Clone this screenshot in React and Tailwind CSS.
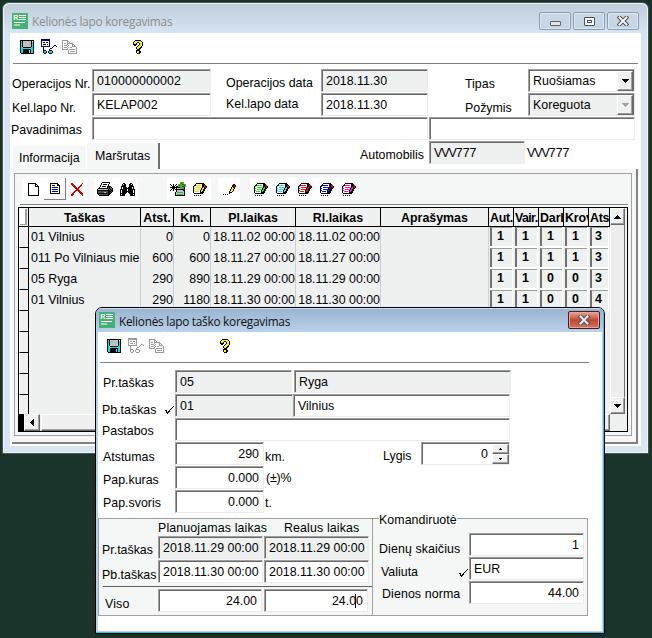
import React from "react";

const PALETTE = {
  K: "#000000", C: "#00e5ee", G: "#c0c0c0", g: "#9a9a9a", W: "#ffffff", Y: "#fff200",
  N: "#000080", R: "#d00000", E: "#20c030", D: "#505050", y: "#808000",
};

function Pixels({ rows, ink, className = "" }) {
  const w = Math.max(...rows.map((r) => r.length));
  const colors = { ...PALETTE, X: ink };
  return (
    <svg width={w} height={rows.length} viewBox={`0 0 ${w} ${rows.length}`} shapeRendering="crispEdges" className={"block shrink-0 " + className}>
      {rows.flatMap((r, y) =>
        [...r].map((c, x) => (c === "." ? null : <rect key={x + "-" + y} x={x} y={y} width="1" height="1" fill={colors[c]} />))
      )}
    </svg>
  );
}

const SAVE = [
  "KKKKKKKKKKKKKK",
  "KCKGGGGGGGGKWK",
  "KCKGGGGGGGGKCK",
  "KCKGGGGGGGGKCK",
  "KCKGGGGGGGGKCK",
  "KCKGGGGGGGGKCK",
  "KCKGGGGGGGGKCK",
  "KCCKKKKKKKKCCK",
  "KCCCCCCCCCCCCK",
  "KCCKKKKKKKKCCK",
  "KCCKKKKKKGKCCK",
  "KCCKKKKKKGKCCK",
  "KCCKKKKKKGKCCK",
  ".KKKKKKKKKKKKK",
];
const VIEW = [
  "NNNNNNNNN.......",
  "NNNNNNNNN.......",
  "NWWWWWWWN.......",
  "NWKKWKKWN.......",
  "NWWWWWWWN.......",
  "NWKKKWKWN.......",
  "NWWWWWWWN....KK.",
  "NNNNNNNNN...K..K",
  "..K........K....",
  "..K......KK.....",
  "..K.....K.......",
  "..KKK...KKK.....",
  "..KCCK.KCCCK....",
  "..KCCK.KCCCK....",
  "...KK...KKK.....",
];
const VIEW_OFF = VIEW.map((r) => r.replace(/[NK]/g, "g").replace(/C/g, "W"));
const COPY = [
  "gggggg.........",
  "gWWWWgg........",
  "gWWWWgWg.......",
  "gWggWgggggg....",
  "gWWWWgWWWWgg...",
  "gWgggWgWWWgWg..",
  "gWWWWgWWWWgggg.",
  "gWgggWgWggWWWWg",
  "gWWWWgWWWWWWWWg",
  "ggggggWggggggWg",
  "......gWWWWWWWg",
  "......gWgggggWg",
  "......gWWWWWWWg",
  "......ggggggggg",
];
const HELP = [
  "..KKKKKK..",
  ".KYYYYYYK.",
  "KYYYKKYYYK",
  "KYYK..KYYK",
  "KKKK..KYYK",
  ".KK..KYYYK",
  "....KYYYK.",
  "...KYYYKK.",
  "...KYYKK..",
  "....KKK...",
  "...KKKK...",
  "...KYYKK..",
  "...KYYKK..",
  "....KKK...",
];
const NEW_PAGE = [
  "KKKKKKKK...",
  "KWWWWWWKK..",
  "KWWWWWWKWK.",
  "KWWWWWWKKKK",
  "KWWWWWWWWWK",
  "KWWWWWWWWWK",
  "KWWWWWWWWWK",
  "KWWWWWWWWWK",
  "KWWWWWWWWWK",
  "KWWWWWWWWWK",
  "KWWWWWWWWWK",
  "KWWWWWWWWWK",
  "KKKKKKKKKKK",
];
const EDIT_PAGE = [
  "KKKKKKKK..",
  "KWWWWWWKK.",
  "KWNNNWWKKK",
  "KWWWWWWWWK",
  "KWNNNNNNWK",
  "KWWWWWWWWK",
  "KWNNNNNNWK",
  "KWWWWWWWWK",
  "KWNNNNNNWK",
  "KWWWWWWWWK",
  "KKKKKKKKKK",
];
const DELETE = [
  "RR.........R.",
  "RRR.......R..",
  ".RRR.....RR..",
  "..RRR...RR...",
  "...RRR.RR....",
  "....RRRR.....",
  ".....RRR.....",
  "....RRRRR....",
  "...RR..RRR...",
  "..RR....RRR..",
  ".RR......RRR.",
  "RRR.......RR.",
  "RR.........R.",
];
const PRINT = [
  ".....KKKKKKKK...",
  "....KWWWWWWWK...",
  "....KWKKKKWK....",
  "...KWWWWWWWK....",
  "...KWKKKKWKKKK..",
  "..KWWWWWWWKDKDK.",
  ".KKKKKKKKKKDKDDK",
  "KGGGGGGGGGGKDKDK",
  "KKKKKKKKKKKKKDKK",
  "KDDDDDDDDDDKKKDK",
  "KDDDDDDGGDDKKDK.",
  "KKKKKKKKKKKKKK..",
  ".KDDDDDDDDDKK...",
  "..KKKKKKKKKK....",
];
const FIND = [
  "...KK.....KK...",
  "..KWKK...KKWK..",
  "..KKKK...KKKK..",
  ".KKKKK...KKKKK.",
  ".KWKKKK.KKKKWK.",
  ".KWKKKKKKKKKWK.",
  "KKKKKKKWKKKKKKK",
  "KWKKKKKWKKKKKWK",
  "KWKKKKKKKKKKKWK",
  "KWKKKKK.KKKKKWK",
  "KKKKKK...KKKKKK",
  "KWKKK.....KKKWK",
  "KKKKK.....KKKKK",
];
const ADD = [
  "..........EEEE..",
  "..........EREE..",
  "K..K..K.EEEERREE",
  ".K.K.K..EREEEERE",
  "..KKK.KKEEEERREE",
  "KKKKKKKKKKEEEEK.",
  "..KKK.KGGGEEEEK.",
  ".K.K.KKKKKKKKKK.",
  "K..K..KGGGGGGKK.",
  "......KGGGGGGGK.",
  ".....KGEEEEEEGK.",
  ".....KGGGGGGGGK.",
  ".....KGEEEEEEGK.",
  ".....KKKKKKKKKK.",
];
const PEN_PAGE = [
  "...KKKKKKKK...",
  "..KWWWWWWKKK..",
  ".KKXXXXXWKKRR.",
  "KXWWWWWWWKKRRK",
  "KWWXXXXXXKXKRK",
  "KXWWWWWWKXXKK.",
  "KWWXXXXXKXKK..",
  "KXWWWWWKXXKK..",
  "KWXXXXWKXKK...",
  "KWWWWWWKKKK...",
  ".KKKKKKKKK....",
  "..............",
  ".K.K.K.K......",
];
const PEN = [
  "..........KK.",
  ".........KRRK",
  ".........KRRK",
  "........KYKK.",
  "........KYYK.",
  ".......KYYK..",
  ".......KYYK..",
  "......KYYK...",
  "......KKK....",
  "......K......",
  "K.K.K........",
];
const CHECK = [
  "........K",
  ".......K.",
  "......K..",
  ".....K...",
  "KK..K....",
  ".K.KK....",
  ".KKK.....",
  "..K......",
];

const Text = ({ className = "", children }) => (
  <div className={"shrink-0 whitespace-pre leading-4 " + className}>{children}</div>
);

/* Sunken text box; height and width come from the caller. */
const Field = ({ className = "", children }) => (
  <div className={"h-[23px] shrink-0 border-t border-l border-r border-b border-t-[#a0a0a0] border-l-[#a0a0a0] border-r-[#ececec] border-b-[#ececec] " + className}>
    <div className="h-full whitespace-pre border-t border-l border-[#696969] pl-[3px] pr-1 pt-[2px] leading-4">{children}</div>
  </div>
);

const Arrow = ({ points, fill = "#000", w = 7, h = 4 }) => (
  <svg width={w} height={h} viewBox={`0 0 ${w} ${h}`} shapeRendering="crispEdges" className="block"><polygon points={points} fill={fill} /></svg>
);

const Raised = ({ className = "", children }) => (
  <div className={"flex shrink-0 items-center justify-center border border-t-white border-l-white border-r-[#696969] border-b-[#696969] bg-[#f0f0f0] shadow-[inset_-1px_-1px_0_#a0a0a0] " + className}>{children}</div>
);

const Combo = ({ text, disabled }) => (
  <div className={"flex h-[23px] w-[107px] border border-t-[#a0a0a0] border-l-[#a0a0a0] border-r-[#ececec] border-b-[#ececec] " + (disabled ? "bg-[#eff0f0]" : "bg-white")}>
    <div className="flex flex-1 border-t border-l border-r border-[#696969]">
      <div className="flex-1 pl-[3px] pt-[2px] leading-4 tracking-[0.05px]">{text}</div>
      <Raised className="h-5 w-4"><Arrow points="0,0 7,0 3.5,4" fill={disabled ? "#a0a0a0" : "#000"} /></Raised>
    </div>
  </div>
);

const Logo = () => (
  <svg width="16" height="16" viewBox="0 0 16 16" className="block shrink-0">
    <rect width="16" height="16" fill="#45b174" />
    <text x="1.3" y="7.4" fontSize="7" fontWeight="bold" fontFamily="Liberation Sans" fill="#fff">R</text>
    <path d="M7 2.5h7M7 4.5h7M7 6.5h7M2 9.5h11M2 12h6" stroke="#fff" strokeWidth="1" />
  </svg>
);

const Cross = () => (
  <svg width="12" height="10" viewBox="0 0 12 10" className="block">
    <path d="M2.5 1.5 L9.5 8.5 M9.5 1.5 L2.5 8.5" stroke="#4a4f5c" strokeWidth="4" strokeLinecap="square" />
    <path d="M2.5 1.5 L9.5 8.5 M9.5 1.5 L2.5 8.5" stroke="#f4f4f4" strokeWidth="2" strokeLinecap="square" />
  </svg>
);

const Caption = ({ children }) => (
  <div className="flex h-[18px] w-8 items-center justify-center rounded-[2px] border border-[#8b9bb0] bg-linear-to-b from-[#cbd8e5] to-[#c5d4e4] shadow-[inset_0_0_0_1px_#dde7f1]">{children}</div>
);

const COLS = [
  { t: "Taškas", w: "w-[112px]", a: "pl-[2px]", rows: ["01 Vilnius", "011 Po Vilniaus mie", "05 Ryga", "01 Vilnius"] },
  { t: "Atst.", w: "w-[33px]", a: "text-right", rows: ["0", "600", "290", "290"] },
  { t: "Km.", w: "w-[37px]", a: "text-right", rows: ["0", "600", "890", "1180"] },
  { t: "Pl.laikas", w: "w-[85px]", a: "text-right", rows: ["18.11.02 00:00", "18.11.27 00:00", "18.11.29 00:00", "18.11.30 00:00"] },
  { t: "Rl.laikas", w: "w-[85px]", a: "text-right", rows: ["18.11.02 00:00", "18.11.27 00:00", "18.11.29 00:00", "18.11.30 00:00"] },
  { t: "Aprašymas", w: "w-[108px]", a: "", rows: [] },
];
const BOX_COLS = [
  { t: "Aut.", w: "w-[25px]", k: "tracking-[-0.3px]", rows: [1, 1, 1, 1] },
  { t: "Vair.", w: "w-[25px]", k: "tracking-[-0.6px]", rows: [1, 1, 1, 1] },
  { t: "Darb", w: "w-[25px]", k: "tracking-[-0.1px]", rows: [1, 1, 0, 0] },
  { t: "Krov", w: "w-[25px]", k: "tracking-[-0.1px]", rows: [1, 1, 0, 0] },
  { t: "Ats", w: "w-[21px]", k: "tracking-[-0.3px]", rows: [3, 3, 3, 4] },
];

function RouteGrid() {
  return (
    <div className="ml-[3px] flex h-[225px] w-[610px] border border-black bg-[#eff0f0]">
      <div className="flex w-[591px] shrink-0 flex-col">
        <div className="flex h-[19px] border-b border-black text-[12.4px] font-bold leading-4">
          <div className="w-[10px] border-r border-black bg-[#f0f0f0] p-px"><div className="h-full border-r-2 border-b border-[#a0a0a0] bg-white" /></div>
          {COLS.map((c) => (
            <div key={c.t} className={"overflow-hidden whitespace-nowrap border-r border-black pt-[2px] text-center " + c.w}>{c.t}</div>
          ))}
          {BOX_COLS.map((c) => (
            <div key={c.t} className={"overflow-hidden whitespace-nowrap border-r border-black pt-[2px] pl-px " + c.w + " " + c.k}>{c.t}</div>
          ))}
        </div>
        <div className="flex h-[187px] overflow-hidden">
          <div className="w-[10px] shrink-0 border-r border-black">
            {Array.from({ length: 9 }, (_, i) => (
              <div key={i} className="h-[21px] border-b border-l border-l-white border-b-black bg-[#f0f0f0] last:border-b-0" />
            ))}
          </div>
          {COLS.map((c) => (
            <div key={c.t} className={"shrink-0 border-r border-[#cfcfcf] " + c.w}>
              {c.rows.map((r, i) => (
                <div key={i} className={"h-[21px] whitespace-nowrap pt-[2px] leading-4 " + c.a}>{r}</div>
              ))}
            </div>
          ))}
          {BOX_COLS.map((c) => (
            <div key={c.t} className={"shrink-0 pl-px pr-px " + c.w}>
              {c.rows.map((r, i) => (
                <div key={i} className="h-[21px] border-r border-b-2 border-white bg-[#eff0f0]">
                  <div className={"h-[19px] border-t border-l-2 border-t-[#a0a0a0] border-l-[#707070] pt-0 font-bold leading-4 " + (c.t === "Ats" ? "pl-[3px]" : "pl-[5px]")}>{r}</div>
                </div>
              ))}
            </div>
          ))}
        </div>
        <div className="flex h-[17px]">
          <div className="w-[5px] bg-black" />
          <Raised className="w-4"><Arrow points="4,0 4,7 0,3.5" w={4} h={7} /></Raised>
          <Raised className="ml-px flex-1" />
        </div>
      </div>
      <div className="flex w-4 flex-col border-r border-[#eff0f0]">
        <Raised className="h-[17px] w-[15px]"><Arrow points="0,4 3.5,0 7,4" /></Raised>
        <div className="w-[15px] flex-1 border-r border-l border-r-[#707070] border-l-white bg-[#ededed]" />
        <Raised className="h-[17px] w-[15px]"><Arrow points="0,0 7,0 3.5,4" /></Raised>
        <div className="h-[17px]" />
      </div>
    </div>
  );
}

const Tool = ({ rows, ink, className = "" }) => (
  <div className={"flex h-[22px] w-[22px] items-center justify-center bg-white " + className}><Pixels rows={rows} ink={ink} /></div>
);

function MainWindow() {
  return (
    <div className="absolute left-[2px] top-[2px] flex h-[452px] w-[647px] flex-col rounded-t-[7px] border border-[#4c5156] bg-[#d7e4f2] px-[7px] shadow-[inset_0_0_0_1px_#eef4fa]">
      <div className="-mx-[6px] mt-px flex h-[29px] shrink-0 items-start rounded-t-[6px] bg-linear-to-b from-[#bfcddb] to-[#d7e4f2] pl-2">
        <div className="mt-[9px]"><Logo /></div>
        <div className="ml-1 mt-[9px] flex-1 whitespace-nowrap font-['Open_Sans',sans-serif] text-[11.8px] leading-4 tracking-[-0.23px] text-[#8c8c8c]">Kelionės lapo koregavimas</div>
        <div className="mr-2 mt-2 flex gap-[2px]">
          <Caption><div className="mt-1 h-[5px] w-[11px] rounded-[1px] border border-[#5b6070] bg-[#e6e6e0]" /></Caption>
          <Caption><div className="flex h-[9px] w-[11px] items-center justify-center rounded-[1px] border border-[#4a4f60] bg-white"><div className="h-[3px] w-[5px] border border-[#4a4f60]" /></div></Caption>
          <Caption><Cross /></Caption>
        </div>
      </div>
      <div className="flex h-[413px] w-[631px] flex-col bg-white">
        <div className="mx-[3px] flex h-[31px] shrink-0 items-start border-b border-[#808080]">
          <Pixels rows={SAVE} className="ml-[7px] mt-[7px]" />
          <Pixels rows={VIEW} className="ml-[7px] mt-[6px]" />
          <Pixels rows={COPY} className="ml-[5px] mt-[7px]" />
          <Pixels rows={HELP} className="ml-14 mt-[7px]" />
        </div>
        <div className="mt-[5px] flex h-6 shrink-0">
          <Text className="w-[82px] pl-[2px] pt-[7px]">Operacijos Nr.</Text>
          <Field className="w-[119px] bg-[#eff0f0]"><span className="tracking-[0.1px]">010000000002</span></Field>
          <Text className="ml-[15px] w-[95px] pt-[6px]">Operacijos data</Text>
          <Field className="w-[107px] bg-[#eff0f0]">2018.11.30</Field>
          <Text className="ml-[37px] w-[63px] pt-[7px]">Tipas</Text>
          <Combo text="Ruošiamas" />
        </div>
        <div className="flex h-6 shrink-0">
          <Text className="w-[82px] pl-[2px] pt-[7px]">Kel.lapo Nr.</Text>
          <Field className="w-[119px] bg-white">KELAP002</Field>
          <Text className="ml-[15px] w-[95px] pt-[3px]">Kel.lapo data</Text>
          <Field className="w-[107px] bg-white">2018.11.30</Field>
          <Text className="ml-[37px] w-[63px] pt-[7px]">Požymis</Text>
          <Combo text="Koreguota" disabled />
        </div>
        <div className="flex h-6 shrink-0">
          <Text className="w-[82px] pl-px pt-[5px]">Pavadinimas</Text>
          <Field className="w-[336px]" />
          <Field className="ml-px w-[206px]" />
        </div>
        <div className="flex h-7 shrink-0">
          <div className="ml-[3px] mt-[5px] h-[23px] w-[73px] bg-[#f5f7f7] pl-[6px] pt-[4px] leading-4">Informacija</div>
          <div className="ml-px mt-[2px] h-[26px] w-[73px] border-r-2 border-[#707070] bg-[#f5f7f7] pl-2 pt-[5px] leading-4">Maršrutas</div>
          <Text className="ml-[200px] w-[69px] pt-[6px]">Automobilis</Text>
          <Field className="w-[96px] bg-[#eff0f0]"><span className="tracking-[-1px]">VVV</span>777</Field>
          <Text className="pl-[2px] pt-1"><span className="tracking-[-1px]">VVV</span>777</Text>
        </div>
        <div className="ml-[2px] h-[275px] w-[626px] shrink-0 border-r-2 border-b-2 border-[#808080] bg-[#f5f7f7] pl-[2px] pt-1">
          <div className="h-[263px] w-[618px] border border-[#a0a0a0]">
            <div className="ml-[5px] mr-[3px] flex h-[31px] border-b border-[#808080] pl-[2px] pt-1">
              <Tool rows={NEW_PAGE} />
              <Tool rows={EDIT_PAGE} className="border-r border-b border-[#808080]" />
              <Tool rows={DELETE} />
              <Tool rows={PRINT} className="ml-[6px]" />
              <Tool rows={FIND} />
              <Tool rows={ADD} className="ml-[29px]" />
              <Tool rows={PEN_PAGE} ink="#f0e000" />
              <Tool rows={PEN} className="ml-[7px]" />
              <Tool rows={PEN_PAGE} ink="#20e020" className="ml-[10px]" />
              <Tool rows={PEN_PAGE} ink="#20e0f0" />
              <Tool rows={PEN_PAGE} ink="#e81010" />
              <Tool rows={PEN_PAGE} ink="#1010d0" />
              <Tool rows={PEN_PAGE} ink="#f810e8" />
            </div>
            <div className="mt-[2px]"><RouteGrid /></div>
          </div>
        </div>
      </div>
    </div>
  );
}

function PointDialog() {
  return (
    <div className="absolute left-[95px] top-[307px] flex h-[327px] w-[510px] flex-col overflow-hidden rounded-t-[7px] border border-black bg-[#b9d1ea]">
      <div className="flex h-full flex-col border-r border-b border-[#35c4e4]">
        <div className="flex h-6 shrink-0 items-start bg-linear-to-b from-[#9ab3cf] to-[#b9d1ea] pl-[3px] shadow-[inset_0_1px_0_#c9dcee]">
          <div className="mt-1"><Logo /></div>
          <div className="ml-1 mt-[5px] flex-1 whitespace-nowrap font-['Open_Sans',sans-serif] text-[11.8px] leading-4 tracking-[-0.25px] text-[#101010]">Kelionės lapo taško koregavimas</div>
          <div className="mr-[3px] mt-[3px] flex h-[18px] w-8 items-center justify-center rounded-[2px] border border-[#4b1a1c] bg-linear-to-b from-[#e8a79c] from-0% via-[#c0452f] via-50% to-[#d2745f] shadow-[inset_0_0_0_1px_#e3a79b]"><Cross /></div>
        </div>
        <div className="mb-px ml-[2px] mr-px flex-1 bg-white">
          <div className="ml-[2px] flex h-[31px] w-[489px] items-start border-b border-[#808080]">
            <Pixels rows={SAVE} className="ml-[7px] mt-[7px]" />
            <Pixels rows={VIEW_OFF} className="ml-[7px] mt-[6px]" />
            <Pixels rows={COPY} className="ml-[5px] mt-[7px]" />
            <Pixels rows={HELP} className="ml-14 mt-[7px]" />
          </div>
          <div className="mt-[7px] flex h-6">
            <Text className="w-[77px] pl-[5px] pt-[5px]">Pr.taškas</Text>
            <Field className="w-[117px] bg-[#eff0f0]">05</Field>
            <Field className="ml-[2px] w-[217px] bg-[#eff0f0]">Ryga</Field>
          </div>
          <div className="flex h-6">
            <Text className="w-[67px] pl-1 pt-2">Pb.taškas</Text>
            <Pixels rows={CHECK} className="mr-px mt-3" />
            <Field className="w-[118px] bg-[#eff0f0]">01</Field>
            <Field className="w-[217px] bg-white">Vilnius</Field>
          </div>
          <div className="flex h-6">
            <Text className="w-[77px] pl-1 pt-[5px]">Pastabos</Text>
            <Field className="w-[335px]" />
          </div>
          <div className="flex h-6">
            <Text className="w-[77px] pl-[5px] pt-[7px]">Atstumas</Text>
            <Field className="w-[89px] text-right">290</Field>
            <Text className="w-[119px] pl-px pt-[7px]">km.</Text>
            <Text className="w-[38px] pt-[6px]">Lygis</Text>
            <div className="flex h-[23px] w-[89px] border border-t-[#a0a0a0] border-l-[#a0a0a0] border-r-[#ececec] border-b-[#ececec]">
              <div className="flex flex-1 border-t border-l border-[#696969]">
                <div className="flex-1 pr-1 pt-[2px] text-right leading-4">0</div>
                <div className="flex w-[17px] flex-col">
                  <Raised className="h-[10px]"><Arrow points="0,2 1.5,0 3,2" w={3} h={2} /></Raised>
                  <Raised className="h-[10px]"><Arrow points="0,0 3,0 1.5,2" w={3} h={2} /></Raised>
                </div>
              </div>
            </div>
          </div>
          <div className="flex h-6">
            <Text className="w-[77px] pl-[5px] pt-[6px]">Pap.kuras</Text>
            <Field className="w-[89px] text-right">0.000</Field>
            <Text className="pl-[2px] pt-1 tracking-[-0.2px]">(±)%</Text>
          </div>
          <div className="flex h-6">
            <Text className="w-[77px] pl-[5px] pt-[5px]">Pap.svoris</Text>
            <Field className="w-[89px] text-right">0.000</Field>
            <Text className="pl-px pt-[5px]">t.</Text>
          </div>
          <div className="mt-1 flex h-[98px]">
            <div className="w-[275px] border border-[#a0a0a0] bg-[#f5f7f7]">
              <div className="flex h-[17px]">
                <Text className="ml-[59px] w-[126px] pt-px tracking-[0.13px]">Planuojamas laikas</Text>
                <Text className="pt-px tracking-[0.13px]">Realus laikas</Text>
              </div>
              <div className="flex h-6">
                <Text className="w-[59px] pl-[3px] pt-[6px]">Pr.taškas</Text>
                <Field className="w-[105px] bg-[#eff0f0]">2018.11.29 00:00</Field>
                <Field className="ml-px w-[105px] bg-[#eff0f0]">2018.11.29 00:00</Field>
              </div>
              <div className="flex h-6">
                <Text className="w-[59px] pl-[3px] pt-[7px]">Pb.taškas</Text>
                <Field className="w-[105px] bg-white">2018.11.30 00:00</Field>
                <Field className="ml-px w-[105px] bg-white">2018.11.30 00:00</Field>
              </div>
              <div className="ml-1 mt-[2px] h-px bg-[#606060]" />
              <div className="mt-[2px] flex h-6">
                <Text className="w-[59px] pl-[6px] pt-[7px] tracking-[0.15px]">Viso</Text>
                <Field className="w-[104px] bg-white text-right">24.00</Field>
                <Field className="ml-[2px] w-[104px] bg-white text-right">24.0<span className="-ml-px border-l border-black">0</span></Field>
              </div>
            </div>
            <div className="w-[215px] border border-l-0 border-[#a0a0a0] bg-[#f5f7f7]">
              <div className="-mt-[6px] h-5 pl-[6px]">
                <div className="h-[12px] w-[78px] bg-white leading-[14px] tracking-[0.05px]">Komandiruotė</div>
              </div>
              <div className="flex h-6">
                <Text className="w-[96px] pl-[6px] pt-2 tracking-[0.1px]">Dienų skaičius</Text>
                <Field className="w-[115px] bg-white text-right">1</Field>
              </div>
              <div className="flex h-6">
                <Text className="w-[86px] pl-2 pt-[7px]">Valiuta</Text>
                <Pixels rows={CHECK} className="mr-px mt-3" />
                <Field className="w-[115px] bg-white">EUR</Field>
              </div>
              <div className="flex h-6">
                <Text className="w-[96px] pl-[9px] pt-[5px] tracking-[0.1px]">Dienos norma</Text>
                <Field className="w-[115px] bg-white text-right">44.00</Field>
              </div>
            </div>
          </div>
        </div>
      </div>
    </div>
  );
}

export default function App() {
  return (
    <div className="relative h-[638px] w-[652px] overflow-hidden bg-[#19332b] font-['Liberation_Sans',Arial,sans-serif] text-[12.4px] text-black">
      <MainWindow />
      <PointDialog />
    </div>
  );
}
